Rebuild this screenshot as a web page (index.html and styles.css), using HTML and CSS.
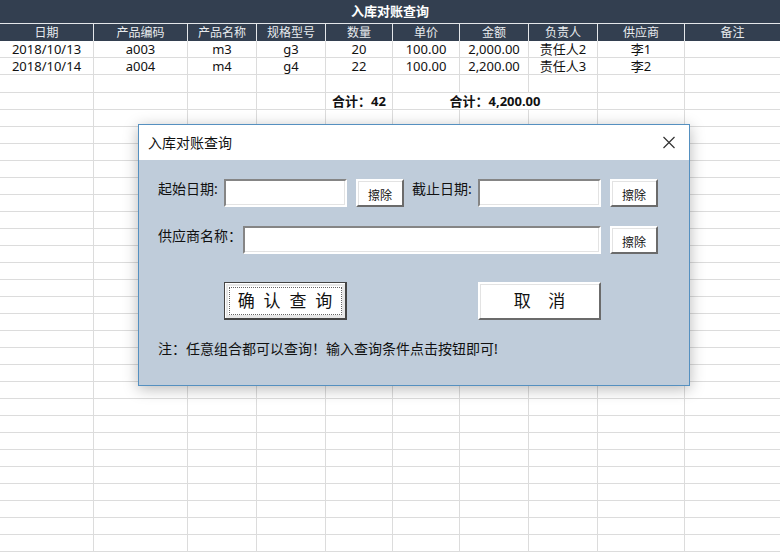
FILE: index.html
```html
<!DOCTYPE html>
<html lang="zh-CN">
<head>
<meta charset="utf-8">
<title>入库对账查询</title>
<link rel="stylesheet" href="styles.css">
</head>
<body>
<table class="sheet">
  <caption class="sheet-title">入库对账查询</caption>
  <colgroup>
    <col class="col-wide"><col class="col-wide"><col class="col-mid"><col class="col-mid"><col class="col-num">
    <col class="col-num"><col class="col-mid"><col class="col-mid"><col class="col-supplier"><col>
  </colgroup>
  <thead>
    <tr><th>日期</th><th>产品编码</th><th>产品名称</th><th>规格型号</th><th>数量</th><th>单价</th><th>金额</th><th>负责人</th><th>供应商</th><th>备注</th></tr>
  </thead>
  <tbody id="rows">
    <tr><td>2018/10/13</td><td>a003</td><td>m3</td><td>g3</td><td>20</td><td>100.00</td><td>2,000.00</td><td>责任人2</td><td>李1</td><td></td></tr>
    <tr><td>2018/10/14</td><td>a004</td><td>m4</td><td>g4</td><td>22</td><td>100.00</td><td>2,200.00</td><td>责任人3</td><td>李2</td><td></td></tr>
    <tr class="spacer"><td></td><td></td><td></td><td></td><td></td><td></td><td></td><td></td><td></td><td></td></tr>
    <tr class="total"><td></td><td></td><td></td><td></td><td>合计：42</td><td colspan="3">合计：4,200.00</td><td></td><td></td></tr>
  </tbody>
</table>

<section class="dialog" role="dialog" aria-labelledby="dialog-title">
  <header class="dialog-bar">
    <h1 class="dialog-title" id="dialog-title">入库对账查询</h1>
    <button class="close" type="button" aria-label="关闭">
      <svg width="14" height="14" viewBox="0 0 14 14" aria-hidden="true"><path d="M1.5 1 12.5 12M12.5 1 1.5 12" fill="none" stroke="#333" stroke-width="1.2"/></svg>
    </button>
  </header>
  <form class="dialog-body">
    <div class="pair">
      <div class="field">
        <label for="start">起始日期:</label>
        <input class="box" id="start" type="text">
        <button class="btn clear" type="button">擦除</button>
      </div>
      <div class="field">
        <label for="end">截止日期:</label>
        <input class="box" id="end" type="text">
        <button class="btn clear" type="button">擦除</button>
      </div>
    </div>
    <div class="field supplier">
      <label for="supplier">供应商名称：</label>
      <input class="box" id="supplier" type="text">
      <button class="btn clear" type="button">擦除</button>
    </div>
    <div class="pair actions">
      <div class="field"><button class="btn action default" type="button">确  认  查  询</button></div>
      <div class="field"><button class="btn action" type="button">取    消</button></div>
    </div>
    <p class="note">注：任意组合都可以查询！输入查询条件点击按钮即可!</p>
  </form>
</section>
<script src="script.js"></script>
</body>
</html>
```
FILE: styles.css
```css
* {
  box-sizing: border-box;
}

body {
  margin: 0;
  min-height: 100vh;
  overflow: hidden;
  background: #fff;
  color: #111;
  font-family: "Noto Sans", "Noto Sans CJK SC", sans-serif;
  font-size: 14px;
}

button,
input {
  font: inherit;
  color: inherit;
  border-radius: 0;
}

.sheet {
  width: 100%;
  table-layout: fixed;
  border-collapse: separate;
  border-spacing: 0;
  font-size: 13px;
  text-align: center;
}

.sheet-title {
  height: 24px;
  border-bottom: 1px solid #e4e7ea;
  background: #333f50;
  color: #fff;
  font-weight: bold;
  line-height: 22px;
}

.col-wide { width: 94px; }
.col-mid { width: 69px; }
.col-num { width: 67px; }
.col-supplier { width: 87px; }

.sheet th,
.sheet td {
  height: 17px;
  padding: 0;
  line-height: 16px;
  white-space: nowrap;
}

.sheet th {
  border-right: 1px solid #e4e7ea;
  background: #333f50;
  color: #e8ebee;
  font-size: 12px;
  font-weight: normal;
}

.sheet td {
  border-right: 1px solid #dcdcdc;
  border-bottom: 1px solid #dcdcdc;
}

.sheet th:last-child,
.sheet td:last-child {
  border-right: 0;
}

.sheet .spacer td {
  height: 18px;
}

.total {
  font-weight: bold;
}

.dialog {
  position: absolute;
  left: 138px;
  top: 124px;
  width: 552px;
  border: 1px solid #5590c0;
  background: #bfccda;
  box-shadow: 0 3px 14px rgba(0, 0, 0, 0.28);
}

.dialog-bar {
  display: flex;
  align-items: center;
  justify-content: space-between;
  height: 35px;
  padding: 0 10px 0 9px;
  background: #fff;
}

.dialog-title {
  margin: 0;
  font-size: 14px;
  font-weight: normal;
  line-height: 20px;
}

.close {
  display: flex;
  padding: 3px;
  border: 0;
  background: none;
}

.dialog-body {
  display: grid;
  gap: 19px;
  padding: 19px 31px 26px 19px;
}

.pair {
  display: grid;
  grid-template-columns: 1fr 1fr;
  gap: 8px;
}

.field {
  display: grid;
  grid-template-columns: 66px 1fr 57px;
}

.supplier {
  grid-template-columns: 85px 1fr 57px;
}

.field label {
  line-height: 20px;
  white-space: nowrap;
}

.box {
  width: 100%;
  min-width: 0;
  height: 28px;
  padding: 0 4px;
  border: 2px solid;
  border-color: #858585 #fff #fff #858585;
  background: #fff;
  box-shadow: inset -1px -1px #e3e3e3;
  outline: 0;
}

.btn {
  padding: 0;
  border: 2px solid;
  border-color: #fff #6b6b6b #6b6b6b #fff;
  background: #fff;
  box-shadow: inset 1px 1px #e3e3e3;
}

.clear {
  height: 28px;
  margin-left: 9px;
  padding-top: 6px;
  font-size: 12px;
  line-height: 18px;
}

.actions {
  margin-top: 9px;
}

.action {
  grid-column: 2;
  height: 38px;
  font-size: 17px;
  line-height: 24px;
  white-space: pre;
}

.default {
  border: 2px solid #444;
  border-top-width: 1px;
  border-left-width: 1px;
  box-shadow: inset 1px 1px #fff, inset 0 0 0 3px #e8e8e8;
  outline: 1px dotted #666;
  outline-offset: -6px;
}

.note {
  margin: 0;
  line-height: 20px;
}
```
FILE: script.js
```js
// Fill the sheet with blank rows below the totals.
const rows = document.getElementById("rows");
for (let r = 0; r < 26; r++) {
  const row = rows.insertRow();
  for (let c = 0; c < 10; c++) row.insertCell();
}
```
